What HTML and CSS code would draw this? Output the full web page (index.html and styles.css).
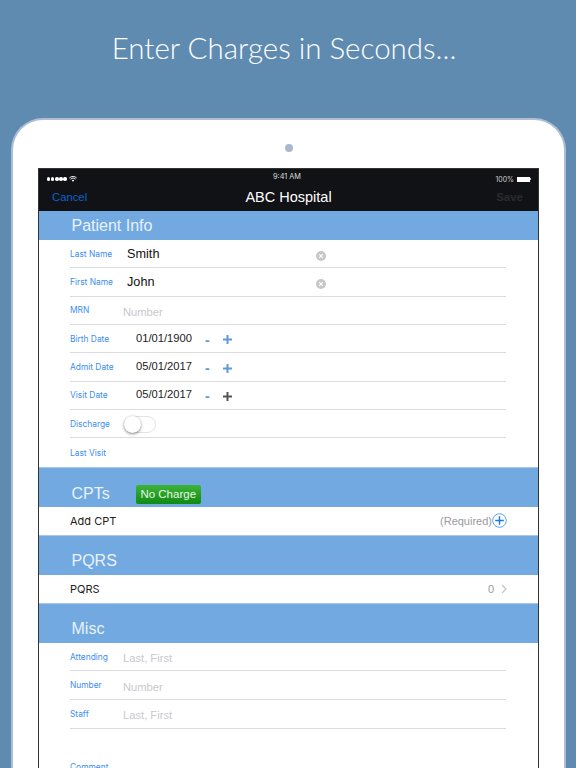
FILE: index.html
```html
<!DOCTYPE html>
<html lang="en">
<head>
<meta charset="utf-8">
<title>Enter Charges in Seconds</title>
<link rel="stylesheet" href="styles.css">
</head>
<body>
<h1 class="headline">Enter Charges in Seconds...</h1>
<div class="device">
  <div class="camera"></div>
  <div class="screen">
    <div class="status">
      <div class="status-left">
        <span class="dots"><i></i><i></i><i></i><i></i><i></i></span>
        <svg class="wifi" width="8" height="6" viewBox="0 0 8 6"><path d="M0.3 2a5.2 5.2 0 0 1 7.4 0M1.5 3.2a3.5 3.5 0 0 1 5 0" fill="none" stroke="#fff" stroke-width="0.9"/><path d="M2.8 4.4a1.7 1.7 0 0 1 2.4 0L4 5.8z" fill="#fff"/></svg>
      </div>
      <div class="status-time">9:41 AM</div>
      <div class="status-right"><span>100%</span><span class="battery"></span><span class="nub"></span></div>
    </div>
    <div class="nav">
      <span class="nav-cancel">Cancel</span>
      <span class="nav-title">ABC Hospital</span>
      <span class="nav-save">Save</span>
    </div>
    <div class="section section-first"><span>Patient Info</span></div>
    <div class="form">
      <div class="row"><label>Last Name</label><span class="value name">Smith</span><span class="clear"><svg width="10" height="10" viewBox="0 0 10 10"><circle cx="5" cy="5" r="5" fill="#c7c7c9"/><path d="M3.2 3.2l3.6 3.6M6.8 3.2l-3.6 3.6" stroke="#fff" stroke-width="1.1"/></svg></span></div>
      <div class="row"><label>First Name</label><span class="value name">John</span><span class="clear"><svg width="10" height="10" viewBox="0 0 10 10"><circle cx="5" cy="5" r="5" fill="#c7c7c9"/><path d="M3.2 3.2l3.6 3.6M6.8 3.2l-3.6 3.6" stroke="#fff" stroke-width="1.1"/></svg></span></div>
      <div class="row"><label>MRN</label><span class="placeholder">Number</span></div>
      <div class="row"><label>Birth Date</label><span class="value date">01/01/1900</span><span class="minus">-</span><span class="plus"><svg width="11" height="11" viewBox="0 0 11 11"><path d="M5.5 1v9M1 5.5h9" stroke="#5c9bd6" stroke-width="2"/></svg></span></div>
      <div class="row"><label>Admit Date</label><span class="value date">05/01/2017</span><span class="minus">-</span><span class="plus"><svg width="11" height="11" viewBox="0 0 11 11"><path d="M5.5 1v9M1 5.5h9" stroke="#5c9bd6" stroke-width="2"/></svg></span></div>
      <div class="row"><label>Visit Date</label><span class="value date">05/01/2017</span><span class="minus">-</span><span class="plus"><svg width="11" height="11" viewBox="0 0 11 11"><path d="M5.5 1v9M1 5.5h9" stroke="#555" stroke-width="2"/></svg></span></div>
      <div class="row"><label>Discharge</label><span class="switch"><span class="knob"></span></span></div>
      <div class="row row-last"><label>Last Visit</label></div>
    </div>
    <div class="section section-tall section-cpt"><span>CPTs</span><span class="no-charge">No Charge</span></div>
    <div class="item"><span>Add CPT</span><span class="item-right"><span class="muted">(Required)</span><svg class="add" width="15" height="15" viewBox="0 0 15 15"><circle cx="7.5" cy="7.5" r="6.8" fill="none" stroke="#5aa2f0" stroke-width="1"/><path d="M7.5 3.2v8.6M3.2 7.5h8.6" stroke="#1a76e8" stroke-width="1.4"/></svg></span></div>
    <div class="section section-tall"><span>PQRS</span></div>
    <div class="item"><span>PQRS</span><span class="item-right"><span class="muted">0</span><svg class="chev" width="6" height="10" viewBox="0 0 6 10"><path d="M1 1l4 4-4 4" fill="none" stroke="#c4c4c8" stroke-width="1.2"/></svg></span></div>
    <div class="section section-tall"><span>Misc</span></div>
    <div class="form form-misc">
      <div class="row"><label>Attending</label><span class="placeholder">Last, First</span></div>
      <div class="row"><label>Number</label><span class="placeholder">Number</span></div>
      <div class="row"><label>Staff</label><span class="placeholder">Last, First</span></div>
      <div class="comment"><label>Comment</label></div>
    </div>
  </div>
</div>
</body>
</html>
```

FILE: styles.css
```css
* { box-sizing: border-box; }
html, body { margin: 0; height: 768px; overflow: hidden; }
body {
  background: #5f8bb0;
  font-family: "Inter", "Liberation Sans", sans-serif;
  display: flex;
  flex-direction: column;
  align-items: flex-start;
}
.headline {
  margin: 0;
  width: 100%;
  height: 118px;
  flex: none;
  padding: 29px 8px 0 0;
  text-align: center;
  font-family: "Lato", sans-serif;
  font-weight: 300;
  font-size: 29.5px;
  line-height: 38px;
  color: #fff;
}
.device {
  margin-left: 11px;
  width: 555px;
  height: 650px;
  flex: none;
  background: #fff;
  border: 2px solid #afbed4;
  border-bottom: 0;
  border-radius: 32px 32px 0 0;
  display: flex;
  flex-direction: column;
  align-items: flex-start;
  padding: 24px 0 0 25px;
}
.camera {
  width: 8px;
  height: 8px;
  border-radius: 50%;
  background: #aab8cf;
  margin-left: 247px;
  margin-bottom: 16px;
}
.screen {
  width: 501px;
  flex: 1;
  border: 1px solid #333;
  border-bottom: 0;
  border-left-width: 1.5px;
  border-right-width: 1.5px;
  background: #fff;
  display: flex;
  flex-direction: column;
  overflow: hidden;
}
.status {
  height: 18px;
  flex: none;
  background: #111215;
  color: #fff;
  font-size: 6.5px;
  display: flex;
  align-items: center;
  justify-content: space-between;
  padding: 0 7px 0 8px;
  position: relative;
}
.status-left, .status-right { display: flex; align-items: center; gap: 2px; }
.status-right { color: #ccc; font-size: 7px; gap: 2px; padding-top: 2px; }
.status-left { padding-top: 2px; }
.dots { display: flex; gap: 0.7px; }
.dots i { width: 3.4px; height: 3.4px; background: #fff; border-radius: 50%; display: block; }
.status-time {
  position: absolute;
  left: 0;
  right: 0;
  top: 3px;
  padding-right: 3px;
  text-align: center;
  color: #ddd;
  font-size: 7.3px;
}
.battery { width: 13px; height: 5px; background: #fff; display: block; margin-left: 1px; }
.nub { width: 1px; height: 2px; background: #ccc; display: block; margin-left: -2px; }
.nav {
  height: 24px;
  flex: none;
  background: #111215;
  position: relative;
  display: flex;
  align-items: center;
  justify-content: space-between;
  padding: 0 15px 4px 13px;
}
.nav-cancel { color: #0a62cc; font-size: 11.3px; font-family: "Liberation Sans", sans-serif; }
.nav-save { color: #2b2c2f; font-size: 11.5px; font-weight: 700; font-family: "Liberation Sans", sans-serif; }
.nav-title {
  position: absolute;
  left: 0;
  right: 0;
  top: 0;
  text-align: center;
  color: #fff;
  font-size: 14.5px;
  line-height: 20px;
  font-family: "Liberation Sans", sans-serif;
}
.section {
  background: #71a9e0;
  color: #e9f2fb;
  flex: none;
  font-size: 16px;
  font-family: "Liberation Sans", sans-serif;
  padding-left: 32.5px;
  display: flex;
  align-items: flex-end;
}
.section-first { height: 29px; align-items: center; }
.section-tall { height: 40px; padding-bottom: 5px; border-top: 1px solid #a9c6e2; }
.section-cpt { padding-bottom: 4px; }
.no-charge {
  margin-left: 26px;
  margin-bottom: -1px;
  width: 65px;
  height: 19px;
  border-radius: 2px;
  background: linear-gradient(#3eb33a, #0f8a12);
  color: #e8f7e6;
  font-size: 11.5px;
  line-height: 19px;
  text-align: center;
}
.form { padding-left: 31px; padding-right: 32px; flex: none; }
.row {
  height: 28.35px;
  border-bottom: 1px solid #dcdce0;
  display: flex;
  align-items: center;
  position: relative;
}
.form-misc .row { height: 28.6px; }
.row-last { border-bottom: 0; }
.row label, .comment label {
  width: 53px;
  flex: none;
  display: block;
  color: #3c8df0;
  font-size: 8.4px;
  font-family: "Inter", sans-serif;
}
.value { color: #222; }
.name { font-size: 12.7px; margin-left: 4px; font-family: "Liberation Sans", sans-serif; color: #111; }
.date { font-size: 11.2px; width: 68px; margin-left: 13px; padding-bottom: 2px; font-family: "Liberation Sans", sans-serif; }
.placeholder { font-size: 11.2px; color: #c8c8ce; font-family: "Liberation Sans", sans-serif; padding-top: 3px; }
.minus { color: #5c9bd6; font-weight: 700; font-size: 14px; width: 17px; padding-left: 1px; padding-top: 2px; font-family: "Liberation Sans", sans-serif; }
.plus { display: flex; padding-top: 2px; margin-left: 1px; }
.clear { display: flex; margin-left: auto; margin-right: 180px; padding-top: 4px; }
.switch {
  width: 32px;
  height: 17px;
  border: 1px solid #e2e2e2;
  border-radius: 9px;
  position: relative;
  display: block;
  margin-left: 1px;
  margin-top: 2px;
}
.knob {
  position: absolute;
  left: -1px;
  top: -1px;
  width: 17px;
  height: 17px;
  border-radius: 50%;
  background: #fff;
  box-shadow: 0 1px 3px rgba(0,0,0,.5);
}
.item {
  height: 28px;
  flex: none;
  background: #fff;
  display: flex;
  align-items: center;
  justify-content: space-between;
  padding: 0 31px 0 31px;
  font-size: 11px;
  color: #222;
  font-family: "Inter", sans-serif;
}
.item-right { display: flex; align-items: center; }
.muted { color: #9a9a9e; font-size: 11px; font-family: "Liberation Sans", sans-serif; }
.chev { margin-left: 7px; }
.comment { padding-top: 33px; }
```
